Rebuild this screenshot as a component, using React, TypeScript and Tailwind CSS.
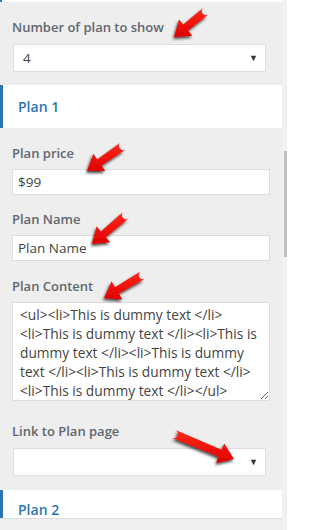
import React from "react";

type Pt = [number, number];

// red pointer arrows drawn over the panel
const arrows: { tail: Pt; head: Pt }[] = [
  { tail: [206, 11], head: [174, 37] },
  { tail: [123, 146], head: [87, 171] },
  { tail: [126, 215], head: [92, 244] },
  { tail: [143, 275], head: [104, 298] },
  { tail: [174, 434], head: [234, 459] },
];

function arrowPath(tail: Pt, head: Pt) {
  const dx = head[0] - tail[0];
  const dy = head[1] - tail[1];
  const len = Math.hypot(dx, dy);
  const d = [dx / len, dy / len];
  const n = [-d[1], d[0]];
  const w = 8.5;
  const hw = 21;
  const hl = 15;
  const b = [head[0] - d[0] * hl, head[1] - d[1] * hl];
  const p = (base: number[], k: number) =>
    `${(base[0] + n[0] * k).toFixed(1)} ${(base[1] + n[1] * k).toFixed(1)}`;
  return [
    `M ${p(tail, w / 2)}`,
    `L ${p(b, w / 2 - 0.5)}`,
    `L ${p(b, hw / 2)}`,
    `L ${head[0]} ${head[1]}`,
    `L ${p(b, -hw / 2)}`,
    `L ${p(b, -w / 2 + 0.5)}`,
    `L ${p(tail, -w / 2)}`,
    `A ${w / 2} ${w / 2} 0 0 1 ${p(tail, w / 2)}`,
    "Z",
  ].join(" ");
}

function Label({ children }: { children: React.ReactNode }) {
  return <div className="text-[13px] leading-[18px] font-semibold text-[#5f676f]">{children}</div>;
}

function SelectBox({ value }: { value: string }) {
  return (
    <div className="mx-[1px] mt-[8px] h-[28px] w-[253px] bg-white border border-[#dddddd] flex items-center justify-between pl-[9px] pr-[7px] text-[13.5px] text-[#444]">
      <span>{value}</span>
      <span className="text-[9px] text-[#333]">▼</span>
    </div>
  );
}

function TextInput({ value }: { value: string }) {
  return (
    <div className="mt-[7px] h-[26px] w-[258px] bg-white border border-[#dddddd] flex items-center px-[5px] text-[13.5px] text-[#444]">
      {value}
    </div>
  );
}

function PlanHeader({ title, className }: { title: string; className: string }) {
  return (
    <div className={`bg-white border-l-[3px] border-[#2d74b3] flex pl-[15px] ${className}`}>
      <span className="text-[14px] font-semibold text-[#2d74b3]">{title}</span>
    </div>
  );
}

export default function App() {
  const content = [
    "<ul><li>This is dummy text </li>",
    "<li>This is dummy text </li><li>This is",
    "dummy text </li><li>This is dummy",
    "text </li><li>This is dummy text </li>",
    "<li>This is dummy text </li></ul>",
  ].join("\n");

  return (
    <div
      className="relative w-[287px] h-[530px] overflow-hidden flex bg-[#eeeeee]"
      style={{ fontFamily: '"Open Sans", "Noto Sans", sans-serif' }}
    >
      {/* Panel */}
      <div className="w-[282px] flex flex-col">
        <div className="h-[2px] bg-white border-l-[2px] border-[#2d74b3]" />

        <div className="px-[12px] pt-[16px]">
          <Label>Number of plan to show</Label>
          <SelectBox value="4" />
        </div>

        <PlanHeader title="Plan 1" className="mt-[13px] h-[43px] items-center leading-[20px]" />

        <div className="px-[12px] pt-[16px]">
          <Label>Plan price</Label>
          <TextInput value="$99" />
        </div>

        <div className="px-[12px] pt-[15px]">
          <Label>Plan Name</Label>
          <TextInput value="Plan Name" />
        </div>

        <div className="px-[12px] pt-[16px]">
          <Label>Plan Content</Label>
          <textarea
            readOnly
            wrap="off"
            value={content}
            className="mt-[7px] block h-[99px] w-[258px] bg-white border border-[#dddddd] px-[7px] py-[2px] text-[13.75px] leading-[19px] text-[#444] resize-y overflow-hidden outline-none whitespace-pre"
          />
        </div>

        <div className="px-[12px] pt-[21px]">
          <Label>Link to Plan page</Label>
          <SelectBox value="" />
        </div>

        <PlanHeader title="Plan 2" className="mt-[14px] h-[28px] items-start pt-[13px] leading-[14px]" />
        <div className="border-t border-[#dddddd] flex-1 bg-[#efefef]" />
      </div>

      {/* Scroll strip */}
      <div className="w-[5px] bg-[#f1f1f1] flex justify-end">
        <div className="mt-[151px] h-[106px] w-[3px] bg-[#c1c1c1]" />
      </div>

      {/* Pointer arrows */}
      <svg className="absolute inset-0 pointer-events-none" width="287" height="530">
        <defs>
          <filter id="sh" x="-30%" y="-30%" width="160%" height="160%">
            <feDropShadow dx="-1" dy="2" stdDeviation="1.4" floodColor="#000" floodOpacity="0.75" />
          </filter>
          <linearGradient id="rd" x1="0" y1="0" x2="0" y2="1">
            <stop offset="0" stopColor="#ff2a1a" />
            <stop offset="1" stopColor="#e00000" />
          </linearGradient>
        </defs>
        {arrows.map((a, i) => (
          <path key={i} d={arrowPath(a.tail, a.head)} fill="url(#rd)" filter="url(#sh)" />
        ))}
      </svg>
    </div>
  );
}
